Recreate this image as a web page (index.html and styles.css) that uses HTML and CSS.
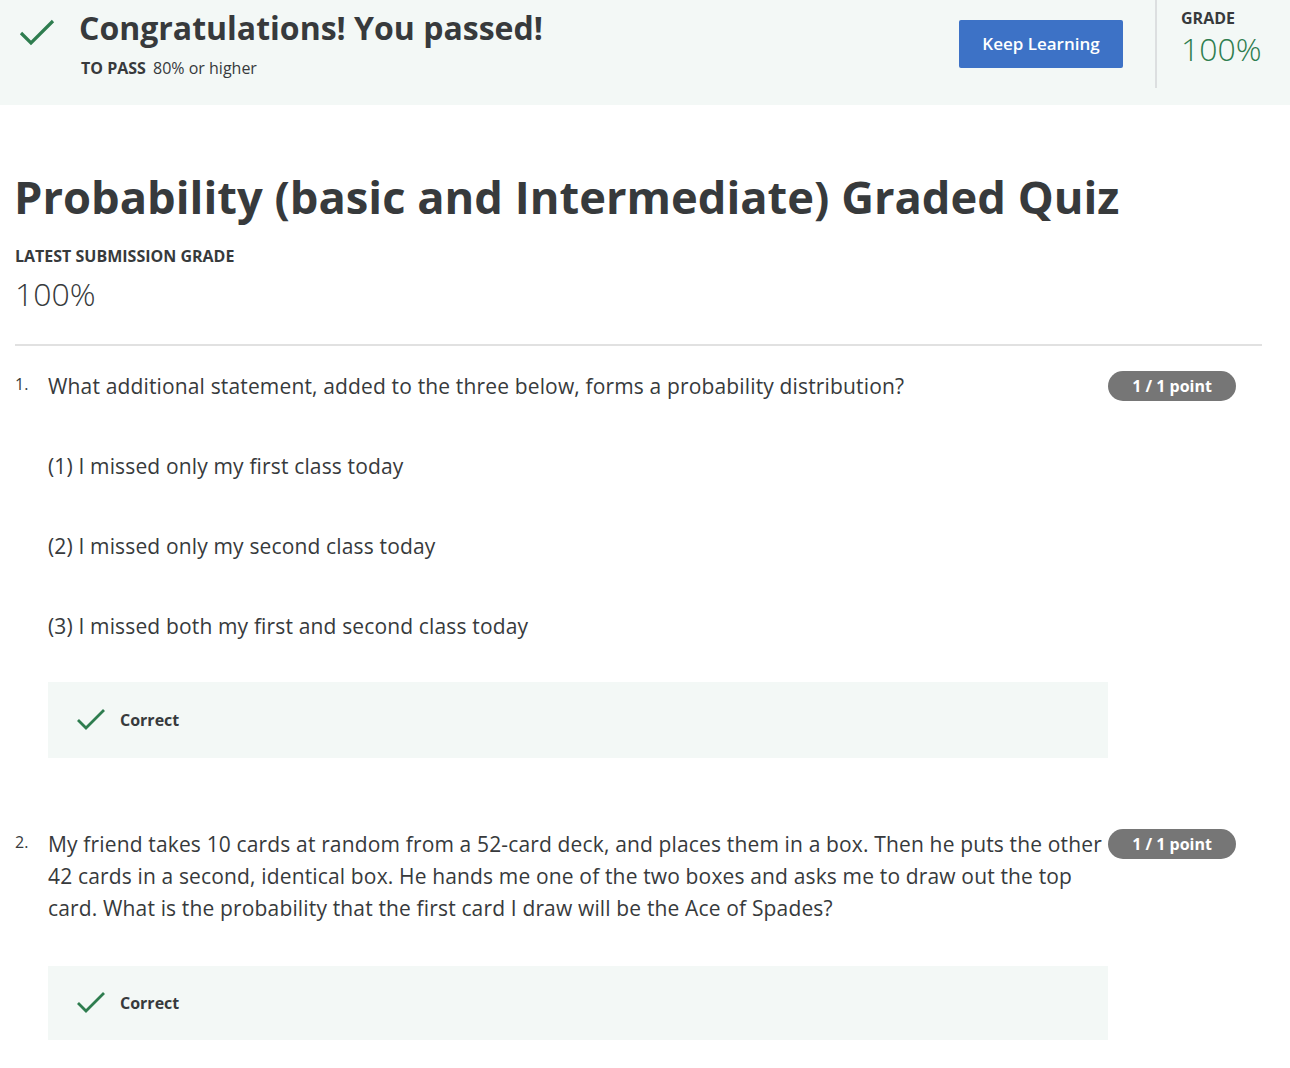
FILE: index.html
```html
<!DOCTYPE html>
<html>
<head>
<meta charset="utf-8">
<link rel="stylesheet" href="styles.css">
</head>
<body>
<header class="banner">
  <div class="banner-main">
    <svg class="check-lg" width="38" height="30" viewBox="0 0 38 30"><path d="M3 15 L13 25 L35 3" fill="none" stroke="#2e7d4f" stroke-width="3.2"/></svg>
    <div class="banner-text">
      <h2 class="congrats">Congratulations! You passed!</h2>
      <div class="topass"><span class="topass-label">TO PASS</span> 80% or higher</div>
    </div>
  </div>
  <button class="btn">Keep Learning</button>
  <div class="grade-box">
    <div class="grade-label">GRADE</div>
    <div class="grade-value">100%</div>
  </div>
</header>

<main class="content">
  <h1 class="quiz-title">Probability (basic and Intermediate) Graded Quiz</h1>
  <div class="latest-label">LATEST SUBMISSION GRADE</div>
  <div class="latest-value">100%</div>
  <hr class="divider">

  <section class="question q1">
    <div class="q-num">1.</div>
    <div class="q-body">
      <div class="q-head">
        <div class="q-text">
          <p>What additional statement, added to the three below, forms a probability distribution?</p>
          <p>(1) I missed only my first class today</p>
          <p>(2) I missed only my second class today</p>
          <p>(3) I missed both my first and second class today</p>
        </div>
        <div class="badge">1 / 1 point</div>
      </div>
      <div class="feedback">
        <svg class="check-sm" width="30" height="24" viewBox="0 0 30 24"><path d="M2 12 L10 20 L28 2" fill="none" stroke="#2e7d4f" stroke-width="2.8"/></svg>
        <span>Correct</span>
      </div>
    </div>
  </section>

  <section class="question q2">
    <div class="q-num">2.</div>
    <div class="q-body">
      <div class="q-head">
        <div class="q-text">
          <p>My friend takes 10 cards at random from a 52-card deck, and places them in a box. Then he puts the other 42 cards in a second, identical box. He hands me one of the two boxes and asks me to draw out the top card. What is the probability that the first card I draw will be the Ace of Spades?</p>
        </div>
        <div class="badge">1 / 1 point</div>
      </div>
      <div class="feedback">
        <svg class="check-sm" width="30" height="24" viewBox="0 0 30 24"><path d="M2 12 L10 20 L28 2" fill="none" stroke="#2e7d4f" stroke-width="2.8"/></svg>
        <span>Correct</span>
      </div>
    </div>
  </section>
</main>
</body>
</html>
```

FILE: styles.css
```css
* { box-sizing: border-box; }
body {
  margin: 0;
  font-family: "Open Sans", "Noto Sans", sans-serif;
  color: #373a3c;
  background: #fff;
}
.banner {
  height: 105px;
  background: #f3f8f6;
  display: flex;
  align-items: flex-start;
}
.banner-main {
  flex: 1;
  display: flex;
  align-items: flex-start;
  padding-left: 18px;
}
.check-lg { margin-top: 18px; }
.banner-text { margin-left: 23px; }
.congrats {
  margin: 6px 0 0 0;
  font-size: 32px;
  font-weight: 700;
  line-height: 44px;
  color: #373a3c;
}
.topass {
  margin-top: 7px;
  margin-left: 2px;
  font-size: 16px;
  line-height: 22px;
}
.topass-label { font-weight: 700; margin-right: 3px; }
.btn {
  margin-top: 20px;
  width: 164px;
  height: 48px;
  border: 0;
  border-radius: 2px;
  background: #3d72c6;
  color: #fff;
  font-family: "Open Sans", sans-serif;
  font-size: 17px;
  font-weight: 600;
  padding-bottom: 2px;
}
.grade-box {
  margin-left: 32px;
  width: 135px;
  height: 88px;
  border-left: 2px solid #dcdfe0;
  padding-left: 24px;
  padding-top: 7px;
}
.grade-label { font-size: 16px; font-weight: 700; line-height: 22px; }
.grade-value {
  font-size: 32px;
  font-weight: 300;
  color: #2e7d4f;
  line-height: 40px;
}
.content {
  padding: 0 28px 0 15px;
}
.quiz-title {
  margin: 62px 0 0 -1px;
  font-size: 45.3px;
  line-height: 60px;
  font-weight: 700;
  color: #373a3c;
}
.latest-label {
  margin-top: 19px;
  font-size: 16px;
  font-weight: 700;
  line-height: 20px;
}
.latest-value {
  margin-top: 8px;
  font-size: 32px;
  font-weight: 300;
  line-height: 40px;
}
.divider {
  margin: 30px 0 0 0;
  border: 0;
  border-top: 2px solid #e1e1e1;
}
.question {
  display: flex;
}
.q1 { margin-top: 24px; }
.q2 { margin-top: 70px; }
.q-num {
  width: 33px;
  font-size: 16px;
  line-height: 28px;
  flex: none;
}
.q-body { flex: 1; }
.q-head { display: flex; align-items: flex-start; }
.q-text { width: 1060px; flex: none; }
.q-text p {
  margin: 0 0 48px 0;
  font-size: 21px;
  letter-spacing: 0.15px;
  line-height: 32px;
}
.q-text p:last-child { margin-bottom: 40px; }
.q2 .q-text p:last-child { margin-bottom: 42px; }
.badge {
  margin-top: 1px;
  width: 128px;
  height: 30px;
  border-radius: 15px;
  background: #767676;
  color: #fff;
  font-size: 16px;
  font-weight: 700;
  line-height: 30px;
  text-align: center;
}
.feedback {
  width: 1060px;
  height: 76px;
  background: #f3f8f6;
  display: flex;
  align-items: center;
  padding-left: 28px;
  font-size: 16px;
  font-weight: 700;
}
.check-sm { margin-right: 14px; }
.q2 .feedback { height: 74px; }
```
